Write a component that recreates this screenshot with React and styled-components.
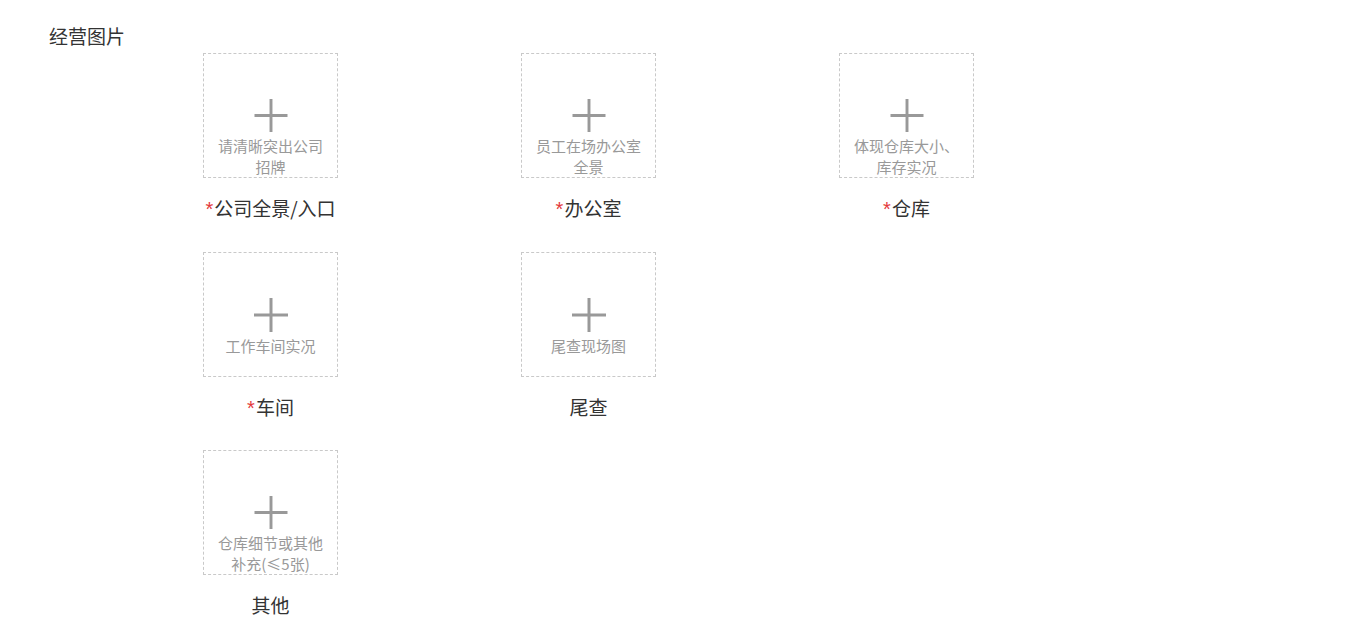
import styled, { createGlobalStyle } from 'styled-components';

const GlobalStyle = createGlobalStyle`
    body {
        margin: 0;
        background: #fff;
        font-family: "Noto Sans CJK SC", "Noto Sans", sans-serif;
        color: #333;
    }
`

const Page = styled.div`
    padding: 23px 0 0 49px;
`

const Title = styled.div`
    font-size: 19px;
    line-height: 26px;
    color: #333;
    margin-bottom: 4px;
`

const Grid = styled.div`
    display: grid;
    grid-template-columns: repeat(3, 135px);
    column-gap: 183px;
    row-gap: 30.5px;
    margin-left: 154px;
`

const Cell = styled.div`
    display: flex;
    flex-direction: column;
    align-items: center;
    grid-column-start: ${(p) => (p.$newRow ? 1 : 'auto')};
`

const UploadBox = styled.div`
    box-sizing: border-box;
    width: 135px;
    height: 125px;
    border: 1px dashed #c9c9c9;
    padding: 45px 10px 0;
    display: flex;
    flex-direction: column;
    align-items: center;
    cursor: pointer;
`

const Hint = styled.div`
    margin-top: 3px;
    font-size: 15px;
    line-height: 21px;
    color: #999;
    text-align: center;
`

const Label = styled.div`
    margin-top: 18px;
    font-size: 19px;
    line-height: 24px;
    color: #333;
    white-space: nowrap;
`

const Star = styled.span`
    color: #e4393c;
    font-family: "Liberation Sans", sans-serif;
    font-size: 20px;
    margin-right: 1px;
`

const Plus = () => (
    <svg width="34" height="34" viewBox="0 0 34 34">
        <path d="M17 0V34M0 17H34" stroke="#999" strokeWidth="3" />
    </svg>
)

const items = [
    { label: '公司全景/入口', hint: '请清晰突出公司招牌', required: true },
    { label: '办公室', hint: '员工在场办公室全景', required: true },
    { label: '仓库', hint: '体现仓库大小、库存实况', required: true },
    { label: '车间', hint: '工作车间实况', required: true },
    { label: '尾查', hint: '尾查现场图', required: false },
    { label: '其他', hint: '仓库细节或其他补充(≤5张)', required: false, newRow: true },
]

const App = () => {
    return (
        <Page>
            <GlobalStyle />
            <Title>经营图片</Title>
            <Grid>
                {items.map((item) => (
                    <Cell key={item.label} $newRow={item.newRow}>
                        <UploadBox>
                            <Plus />
                            <Hint>{item.hint}</Hint>
                        </UploadBox>
                        <Label>
                            {item.required && <Star>*</Star>}
                            {item.label}
                        </Label>
                    </Cell>
                ))}
            </Grid>
        </Page>
    );
}

export default App
